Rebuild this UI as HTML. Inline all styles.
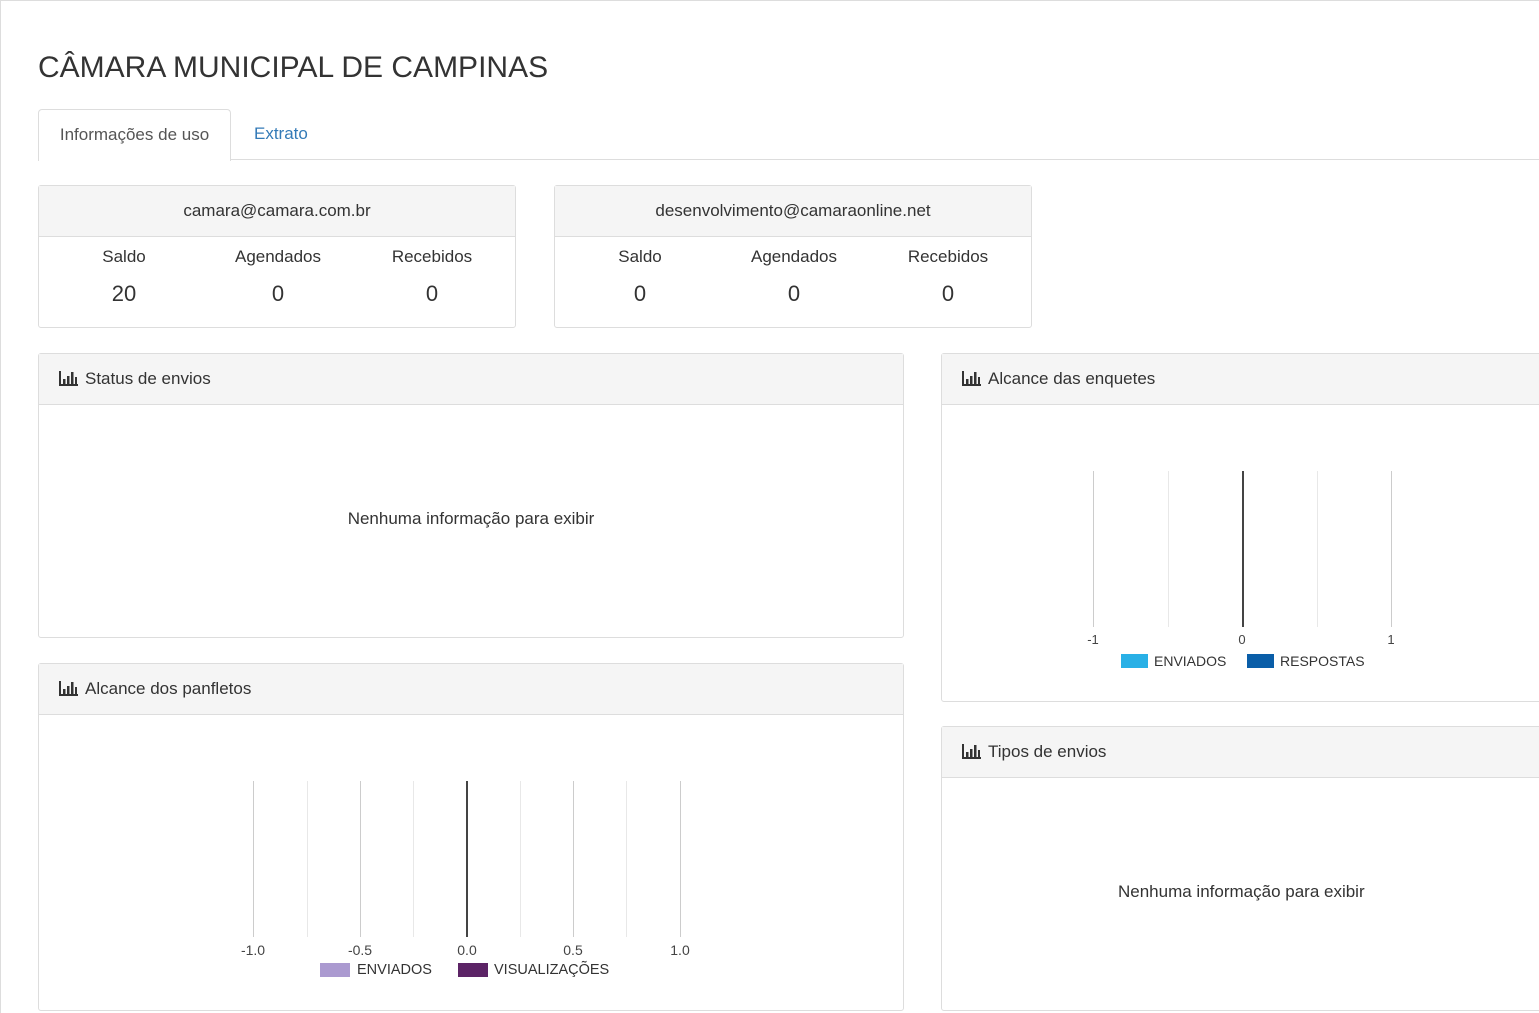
<!DOCTYPE html><html><head><meta charset="utf-8"><style>
body{margin:0;width:1539px;height:1013px;overflow:hidden;background:#fff;font-family:"Liberation Sans",sans-serif;color:#333;position:relative}
.a{position:absolute}
.p{position:absolute;border:1px solid #ddd;border-radius:3px;background:#fff;box-sizing:border-box}
.h{background:#f5f5f5;border-bottom:1px solid #ddd;height:51px;box-sizing:border-box;font-size:17px;line-height:50px;padding-left:20px}
.c{text-align:center}
.ic{display:inline-block;vertical-align:-2px;margin-right:6px}
.l{position:absolute;width:1px;background:#ccc}
.t{position:absolute;font-size:14px;color:#444;transform:translateX(-50%)}
</style></head><body>
<div class="a" style="left:0;top:0;width:1539px;height:1px;background:#ddd"></div>
<div class="a" style="left:0;top:0;width:1px;height:1013px;background:#ddd"></div>
<div class="a" style="left:38px;top:51px;font-size:30px;color:#333">CÂMARA MUNICIPAL DE CAMPINAS</div>
<div class="a" style="left:38px;top:159px;width:1501px;height:1px;background:#ddd"></div>
<div class="a" style="left:38px;top:109px;width:191px;height:51px;border:1px solid #ddd;border-bottom:none;border-radius:4px 4px 0 0;background:#fff;font-size:17px;line-height:50px;text-align:center;color:#555">Informações de uso</div>
<div class="a" style="left:254px;top:124px;font-size:17px;color:#337ab7">Extrato</div>

<div class="p" style="left:38px;top:185px;width:478px;height:143px">
<div class="h c" style="padding:0">camara@camara.com.br</div>
<div class="a c" style="left:8px;top:61px;width:154px;font-size:17px">Saldo<div style="font-size:22px;margin-top:14px">20</div></div>
<div class="a c" style="left:162px;top:61px;width:154px;font-size:17px">Agendados<div style="font-size:22px;margin-top:14px">0</div></div>
<div class="a c" style="left:316px;top:61px;width:154px;font-size:17px">Recebidos<div style="font-size:22px;margin-top:14px">0</div></div>
</div>
<div class="p" style="left:554px;top:185px;width:478px;height:143px">
<div class="h c" style="padding:0">desenvolvimento@camaraonline.net</div>
<div class="a c" style="left:8px;top:61px;width:154px;font-size:17px">Saldo<div style="font-size:22px;margin-top:14px">0</div></div>
<div class="a c" style="left:162px;top:61px;width:154px;font-size:17px">Agendados<div style="font-size:22px;margin-top:14px">0</div></div>
<div class="a c" style="left:316px;top:61px;width:154px;font-size:17px">Recebidos<div style="font-size:22px;margin-top:14px">0</div></div>
</div>

<svg width="0" height="0" style="position:absolute"><defs><symbol id="bar" viewBox="0 0 20 16"><path d="M1 1V15H19" stroke="#333" stroke-width="2" fill="none"/><rect x="4" y="9" width="2.5" height="5" fill="#333"/><rect x="8" y="6" width="2.5" height="8" fill="#333"/><rect x="12" y="2" width="2.5" height="12" fill="#333"/><rect x="16" y="7" width="2" height="7" fill="#333"/></symbol></defs></svg>

<div class="p" style="left:38px;top:353px;width:866px;height:285px">
<div class="h"><svg class="ic" width="20" height="16"><use href="#bar"/></svg>Status de envios</div>
<div class="a c" style="left:0;width:864px;top:155px;font-size:17px">Nenhuma informação para exibir</div>
</div>

<div class="p" style="left:38px;top:663px;width:866px;height:348px">
<div class="h"><svg class="ic" width="20" height="16"><use href="#bar"/></svg>Alcance dos panfletos</div>
</div>
<div class="l" style="left:253px;top:781px;height:156px"></div>
<div class="l" style="left:307px;top:781px;height:156px;background:#e8e8e8"></div>
<div class="l" style="left:360px;top:781px;height:156px"></div>
<div class="l" style="left:413px;top:781px;height:156px;background:#e8e8e8"></div>
<div class="l" style="left:466px;top:781px;height:156px;background:#444;width:2px"></div>
<div class="l" style="left:520px;top:781px;height:156px;background:#e8e8e8"></div>
<div class="l" style="left:573px;top:781px;height:156px"></div>
<div class="l" style="left:626px;top:781px;height:156px;background:#e8e8e8"></div>
<div class="l" style="left:680px;top:781px;height:156px"></div>
<div class="t" style="left:253px;top:942px">-1.0</div><div class="t" style="left:360px;top:942px">-0.5</div><div class="t" style="left:467px;top:942px">0.0</div><div class="t" style="left:573px;top:942px">0.5</div><div class="t" style="left:680px;top:942px">1.0</div>
<div class="a" style="left:320px;top:963px;width:30px;height:14px;background:#ab9ad0"></div>
<div class="a" style="left:357px;top:962px;font-size:14.5px;color:#333">ENVIADOS</div>
<div class="a" style="left:458px;top:963px;width:30px;height:14px;background:#5c2466"></div>
<div class="a" style="left:494px;top:962px;font-size:14.5px;color:#333">VISUALIZAÇÕES</div>

<div class="p" style="left:941px;top:353px;width:610px;height:349px">
<div class="h"><svg class="ic" width="20" height="16"><use href="#bar"/></svg>Alcance das enquetes</div>
</div>
<div class="l" style="left:1093px;top:471px;height:156px"></div>
<div class="l" style="left:1168px;top:471px;height:156px;background:#e8e8e8"></div>
<div class="l" style="left:1242px;top:471px;height:156px;background:#444;width:2px"></div>
<div class="l" style="left:1317px;top:471px;height:156px;background:#e8e8e8"></div>
<div class="l" style="left:1391px;top:471px;height:156px"></div>
<div class="t" style="left:1093px;top:632px;font-size:13px">-1</div><div class="t" style="left:1242px;top:632px;font-size:13px">0</div><div class="t" style="left:1391px;top:632px;font-size:13px">1</div>
<div class="a" style="left:1121px;top:654px;width:27px;height:14px;background:#29b0e6"></div>
<div class="a" style="left:1154px;top:653px;font-size:14px">ENVIADOS</div>
<div class="a" style="left:1247px;top:654px;width:27px;height:14px;background:#0a5ea8"></div>
<div class="a" style="left:1280px;top:653px;font-size:14px">RESPOSTAS</div>

<div class="p" style="left:941px;top:726px;width:610px;height:285px">
<div class="h"><svg class="ic" width="20" height="16"><use href="#bar"/></svg>Tipos de envios</div>
<div class="a" style="left:176px;top:155px;font-size:17px">Nenhuma informação para exibir</div>
</div>
</body></html>
